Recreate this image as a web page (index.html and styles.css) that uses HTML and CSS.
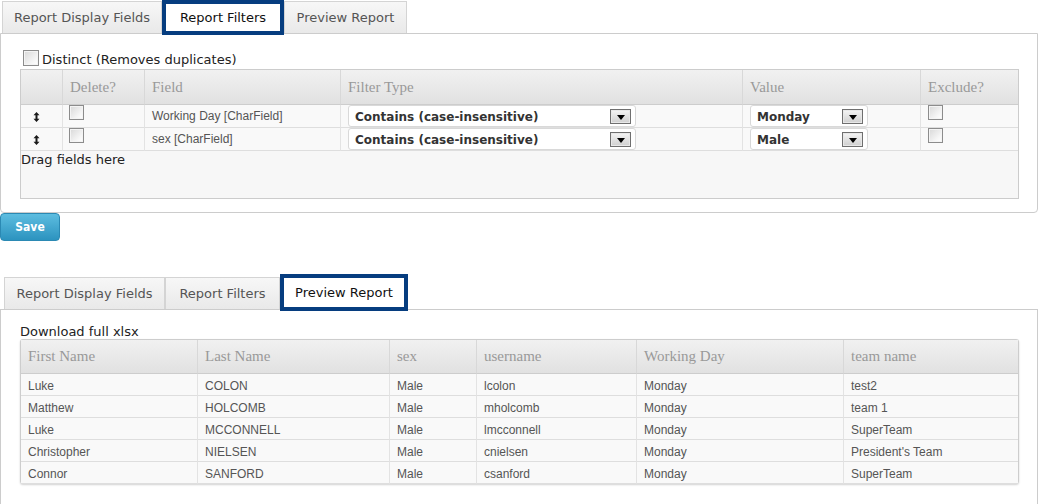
FILE: index.html
```html
<!DOCTYPE html>
<html>
<head>
<meta charset="utf-8">
<title>Report Builder</title>
<link rel="stylesheet" href="styles.css">
</head>
<body>
<div class="tabs">
  <div class="tab w-display">Report Display Fields</div>
  <div class="tab tab-active w-filters-active">Report Filters</div>
  <div class="tab w-preview">Preview Report</div>
</div>
<div class="panel panel-filters">
  <div class="distinct"><span class="cb"></span><span class="distinct-label">Distinct (Removes duplicates)</span></div>
  <div class="dropzone">
    <table class="grid filters">
      <thead>
        <tr>
          <th class="f1"></th>
          <th class="f2">Delete?</th>
          <th class="f3">Field</th>
          <th class="f4">Filter Type</th>
          <th class="f5">Value</th>
          <th class="f6">Exclude?</th>
        </tr>
      </thead>
      <tbody>
        <tr>
          <td class="handle"><svg width="7" height="10" viewBox="0 0 7 10"><path d="M3.5 0L6.5 3.3H4.5V6.7H6.5L3.5 10L0.5 6.7H2.5V3.3H0.5Z" fill="#1a1a1a"/></svg></td>
          <td class="cbcell"><span class="cb"></span></td>
          <td>Working Day [CharField]</td>
          <td class="selcell"><div class="select sel-type"><span>Contains (case-insensitive)</span><span class="arrow"></span></div></td>
          <td class="selcell"><div class="select sel-value"><span>Monday</span><span class="arrow"></span></div></td>
          <td class="cbcell"><span class="cb"></span></td>
        </tr>
        <tr>
          <td class="handle"><svg width="7" height="10" viewBox="0 0 7 10"><path d="M3.5 0L6.5 3.3H4.5V6.7H6.5L3.5 10L0.5 6.7H2.5V3.3H0.5Z" fill="#1a1a1a"/></svg></td>
          <td class="cbcell"><span class="cb"></span></td>
          <td>sex [CharField]</td>
          <td class="selcell"><div class="select sel-type"><span>Contains (case-insensitive)</span><span class="arrow"></span></div></td>
          <td class="selcell"><div class="select sel-value"><span>Male</span><span class="arrow"></span></div></td>
          <td class="cbcell"><span class="cb"></span></td>
        </tr>
      </tbody>
    </table>
    <div class="drag-hint">Drag fields here</div>
  </div>
</div>
<button class="btn-save">Save</button>

<div class="tabs tabs-preview">
  <div class="tab w-display2">Report Display Fields</div>
  <div class="tab w-filters">Report Filters</div>
  <div class="tab tab-active w-preview-active">Preview Report</div>
</div>
<div class="panel panel-preview">
  <div class="download">Download full xlsx</div>
  <table class="grid preview">
    <thead>
      <tr>
        <th class="p1">First Name</th>
        <th class="p2">Last Name</th>
        <th class="p3">sex</th>
        <th class="p4">username</th>
        <th class="p5">Working Day</th>
        <th class="p6">team name</th>
      </tr>
    </thead>
    <tbody>
      <tr><td>Luke</td><td>COLON</td><td>Male</td><td>lcolon</td><td>Monday</td><td>test2</td></tr>
      <tr><td>Matthew</td><td>HOLCOMB</td><td>Male</td><td>mholcomb</td><td>Monday</td><td>team 1</td></tr>
      <tr><td>Luke</td><td>MCCONNELL</td><td>Male</td><td>lmcconnell</td><td>Monday</td><td>SuperTeam</td></tr>
      <tr><td>Christopher</td><td>NIELSEN</td><td>Male</td><td>cnielsen</td><td>Monday</td><td>President's Team</td></tr>
      <tr><td>Connor</td><td>SANFORD</td><td>Male</td><td>csanford</td><td>Monday</td><td>SuperTeam</td></tr>
    </tbody>
  </table>
</div>
</body>
</html>
```

FILE: styles.css
```css
body {
  margin: 0;
  background: #fff;
  color: #222;
  font-family: "DejaVu Sans", Verdana, sans-serif;
  font-size: 13px;
}

/* ---------- tabs ---------- */
.tabs {
  display: flex;
  align-items: flex-start;
  height: 33px;
  padding-left: 2px;
}
.tab {
  box-sizing: border-box;
  height: 32px;
  margin-top: 1px;
  display: flex;
  align-items: center;
  justify-content: center;
  border: 1px solid #d4d4d4;
  border-bottom: 0;
  background: linear-gradient(#f7f7f7, #e9e9e9);
  color: #555;
  white-space: nowrap;
}
.tab-active {
  position: relative;
  z-index: 1;
  height: 35px;
  margin-top: 0;
  border: 4px solid #063d7f;
  background: #fff;
  color: #111;
}
.w-display { width: 160px; }
.w-filters-active { width: 122px; }
.w-preview { width: 123px; }
.w-display2 { width: 161px; }
.w-filters { width: 115px; }
.w-preview-active { width: 128px; }

.tabs-preview {
  height: 35px;
  padding-left: 4px;
}
.tabs-preview .tab { margin-top: 3px; }
.tabs-preview .tab-active { margin-top: 0; height: 37px; }

/* ---------- panels ---------- */
.panel {
  border: 1px solid #ccc;
  margin-right: 1px;
  background: #fff;
}
.panel-filters {
  padding: 16px 18px 13px 19px;
  border-radius: 0 0 4px 4px;
}
.panel-preview {
  padding: 14px 18px 40px 19px;
}

.distinct {
  display: flex;
  align-items: flex-end;
  height: 16px;
  padding-left: 3px;
}
.distinct .cb { width: 16px; height: 16px; margin-right: 3px; }
.distinct-label { line-height: 12px; }

.cb {
  display: block;
  box-sizing: border-box;
  width: 15px;
  height: 15px;
  border: 1px solid #8c8c8c;
  background: linear-gradient(135deg, #d8d8d8, #f6f6f6 70%, #fff);
  box-shadow: inset 0 0 0 1px #f4f4f4;
}

.dropzone {
  box-sizing: border-box;
  width: 999px;
  min-height: 130px;
  margin-top: 3px;
  border: 1px solid #ccc;
  background: #f7f7f7;
}
.drag-hint {
  padding-top: 1px;
  line-height: 16px;
  color: #222;
}

/* ---------- tables ---------- */
.grid {
  border-spacing: 0;
  table-layout: fixed;
}
.grid th {
  box-sizing: border-box;
  padding: 0 0 0 7px;
  text-align: left;
  font-family: "Liberation Serif", "Times New Roman", serif;
  font-size: 15px;
  font-weight: normal;
  color: #999;
  background: linear-gradient(#f1f1f1, #e1e1e1);
  border-bottom: 1px solid #cdcdcd;
  border-left: 1px solid #d8d8d8;
  vertical-align: middle;
}
.grid th:first-child { border-left: 0; }
.grid td {
  box-sizing: border-box;
  padding: 0 0 0 7px;
  font-family: "Liberation Sans", Arial, sans-serif;
  font-size: 12px;
  color: #555;
  background: #f9f9f9;
  border-bottom: 1px solid #dedede;
  border-left: 1px solid #e3e3e3;
  vertical-align: middle;
  white-space: nowrap;
}
.grid td:first-child { border-left: 0; }

.filters { width: 997px; }
.filters th { height: 35px; }
.filters td { height: 23px; }
.f1 { width: 41px; }
.f2 { width: 82px; }
.f3 { width: 196px; }
.f4 { width: 402px; }
.f5 { width: 178px; }
.f6 { width: 98px; }

.filters td.handle { padding: 2px 0 0 12px; }
.handle svg { display: block; }
.filters td.cbcell { vertical-align: top; padding: 0 0 0 6px; }
.filters td.cbcell:last-child { padding-left: 7px; }
.filters td.selcell { vertical-align: top; padding: 0 0 0 7px; }

.select {
  box-sizing: border-box;
  height: 22px;
  display: flex;
  align-items: center;
  justify-content: space-between;
  padding: 1px 4px 0 6px;
  background: #fff;
  border: 1px solid #d9d9d9;
  border-radius: 3px;
  font-family: "DejaVu Sans", Verdana, sans-serif;
  font-size: 12px;
  font-weight: bold;
  color: #333;
}
.sel-type { width: 288px; }
.sel-value { width: 118px; }
.arrow {
  box-sizing: border-box;
  width: 21px;
  height: 15px;
  border: 1px solid #6f6f6f;
  background: linear-gradient(#f5f5f5, #cfcfcf);
  box-shadow: inset 0 0 0 1px #e8e8e8;
  display: flex;
  align-items: center;
  justify-content: center;
}
.arrow::after {
  content: "";
  display: block;
  width: 0;
  height: 0;
  margin-top: 1px;
  border-left: 4.5px solid transparent;
  border-right: 4.5px solid transparent;
  border-top: 5px solid #000;
}

/* ---------- save ---------- */
.btn-save {
  display: block;
  box-sizing: border-box;
  width: 60px;
  height: 28px;
  margin: 0 0 33px 0;
  padding: 0;
  border: 1px solid #2b89b3;
  border-radius: 4px;
  background: linear-gradient(#5dbde0, #2c93bf);
  color: #fff;
  font-family: "DejaVu Sans Condensed", "DejaVu Sans", sans-serif;
  font-size: 12px;
  font-weight: bold;
}

/* ---------- preview ---------- */
.download {
  line-height: 15px;
  color: #222;
}
.preview {
  width: 999px;
  border: 1px solid #cdcdcd;
  border-bottom: 0;
  border-radius: 3px;
  box-shadow: 0 1px 2px rgba(0, 0, 0, 0.18);
}
.preview th { height: 34px; padding-left: 7px; }
.preview td { height: 22px; padding: 2px 0 0 7px; }
.p1 { width: 176px; }
.p2 { width: 192px; }
.p3 { width: 87px; }
.p4 { width: 160px; }
.p5 { width: 207px; }
.p6 { width: 175px; }
```
